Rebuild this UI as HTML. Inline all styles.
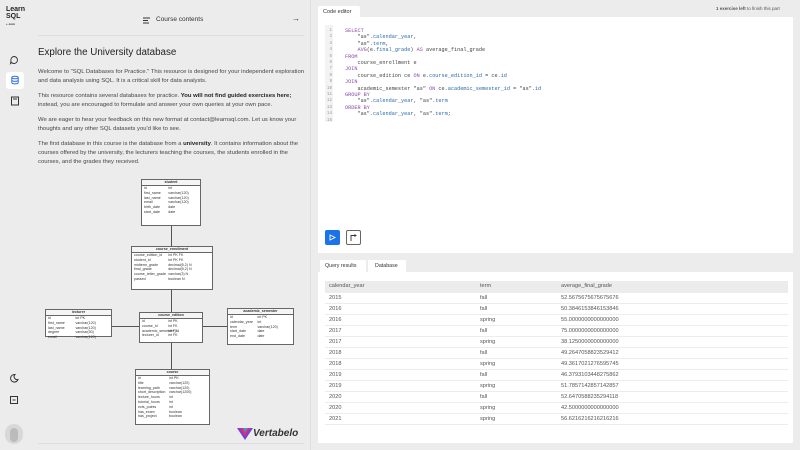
<!DOCTYPE html>
<html><head><meta charset="utf-8"><style>
*{box-sizing:border-box;margin:0;padding:0}
body{width:800px;height:450px;background:#ececec;font-family:"Liberation Sans",sans-serif;position:relative;overflow:hidden;color:#333}
.abs{position:absolute}
p.t{position:absolute;left:38px;width:270px;font-size:5.9px;line-height:9px;color:#444}
.code{font-family:"Liberation Mono",monospace;font-size:5.2px;line-height:6.4px;white-space:pre}
.ln{color:#999;text-align:right;width:10px}
.k{color:#8a4ca8}.s{color:#2a6aa8}
table{border-collapse:collapse;font-size:5.6px;color:#555}
td{height:11px;border-bottom:1px solid #ececec;padding-left:4px}
.er{position:absolute;background:#fff;border:1px solid #666;font-size:3.6px;font-family:"Liberation Sans",sans-serif;color:#333;line-height:4.8px}
.er .h{border-bottom:1px solid #666;text-align:center;font-weight:bold;background:#f5f5f5;line-height:5px}
.er .r{display:flex;padding:0 2px}
.er .r span:nth-child(1){width:45%}.er .r span:nth-child(2){flex:1}
.ln2{position:absolute;background:#555}
</style></head><body>
<div class="abs" style="left:6px;top:6px;font-size:7px;font-weight:bold;line-height:7px;color:#222">Learn<br>SQL<br><span style="font-size:3px">+ com</span></div>
<svg class="abs" style="left:9px;top:55px" width="10" height="10"><path d="M5 1.5a3.5 3.5 0 1 1-2.5 6L1.5 8.5 2 6A3.5 3.5 0 0 1 5 1.5z" fill="none" stroke="#333" stroke-width="0.9"/></svg>
<div class="abs" style="left:6px;top:72px;width:18px;height:17px;background:#fff;border-radius:3px"></div>
<svg class="abs" style="left:10px;top:75px" width="10" height="10"><ellipse cx="5" cy="2.5" rx="3.2" ry="1.3" fill="none" stroke="#2d6fe0"/><path d="M1.8 2.5v5c0 1.8 6.4 1.8 6.4 0v-5M1.8 5c0 1.8 6.4 1.8 6.4 0" fill="none" stroke="#2d6fe0"/></svg>
<svg class="abs" style="left:10px;top:96px" width="10" height="10"><rect x="1.5" y="1" width="7" height="8" fill="none" stroke="#333"/><path d="M3 3h4" stroke="#333"/></svg>
<svg class="abs" style="left:9px;top:373px" width="10" height="10"><path d="M6 1.5a3.8 3.8 0 1 0 3 5 3 3 0 0 1-3-5z" fill="none" stroke="#333"/></svg>
<svg class="abs" style="left:9px;top:395px" width="10" height="10"><rect x="1.5" y="1.5" width="7" height="7" fill="none" stroke="#333"/><path d="M3.5 5h3" stroke="#333"/></svg>
<div class="abs" style="left:5px;top:424px;width:18px;height:20px;border-radius:9px;background:#d8d8d8"></div>
<div class="abs" style="left:10px;top:428px;width:8px;height:14px;background:#bbb;border-radius:4px"></div>

<svg class="abs" style="left:143px;top:17px" width="8" height="7"><path d="M0 1h7M0 3.5h5M0 6h6" stroke="#333" stroke-width="1"/></svg>
<div class="abs" style="left:156px;top:16px;font-size:6.5px;color:#333">Course contents</div>
<div class="abs" style="left:292px;top:14px;font-size:8px;color:#333">→</div>
<div class="abs" style="left:38px;top:35px;width:266px;height:1px;background:#ddd"></div>
<div class="abs" style="left:38px;top:47px;font-size:9.8px;color:#222">Explore the University database</div>
<p class="t" style="top:68px">Welcome to "SQL Databases for Practice." This resource is designed for your independent exploration and data analysis using SQL. It is a critical skill for data analysts.</p>
<p class="t" style="top:92px">This resource contains several databases for practice. <b style="color:#222">You will not find guided exercises here;</b> instead, you are encouraged to formulate and answer your own queries at your own pace.</p>
<p class="t" style="top:116px">We are eager to hear your feedback on this new format at contact@learnsql.com. Let us know your thoughts and any other SQL datasets you'd like to see.</p>
<p class="t" style="top:140px">The first database in this course is the database from a <b style="color:#222">university</b>. It contains information about the courses offered by the university, the lecturers teaching the courses, the students enrolled in the courses, and the grades they received.</p>

<div class="ln2" style="left:171px;top:226px;width:1px;height:20px"></div>
<div class="ln2" style="left:171px;top:290px;width:1px;height:22px"></div>
<div class="ln2" style="left:171px;top:343px;width:1px;height:26px"></div>
<div class="ln2" style="left:112px;top:326px;width:27px;height:1px"></div>
<div class="ln2" style="left:203px;top:326px;width:24px;height:1px"></div>
<div class="er" style="left:141px;top:179px;width:60px;height:47px"><div class="h">student</div><div class="r"><span>id</span><span>int</span></div><div class="r"><span>first_name</span><span>varchar(120)</span></div><div class="r"><span>last_name</span><span>varchar(120)</span></div><div class="r"><span>email</span><span>varchar(120)</span></div><div class="r"><span>birth_date</span><span>date</span></div><div class="r"><span>start_date</span><span>date</span></div></div>
<div class="er" style="left:131px;top:246px;width:82px;height:44px"><div class="h">course_enrollment</div><div class="r"><span>course_edition_id</span><span>int PK FK</span></div><div class="r"><span>student_id</span><span>int PK FK</span></div><div class="r"><span>midterm_grade</span><span>decimal(5,2) N</span></div><div class="r"><span>final_grade</span><span>decimal(5,2) N</span></div><div class="r"><span>course_letter_grade</span><span>varchar(3) N</span></div><div class="r"><span>passed</span><span>boolean N</span></div></div>
<div class="er" style="left:139px;top:312px;width:64px;height:31px"><div class="h">course_edition</div><div class="r"><span>id</span><span>int PK</span></div><div class="r"><span>course_id</span><span>int FK</span></div><div class="r"><span>academic_semester_id</span><span>int FK</span></div><div class="r"><span>lecturer_id</span><span>int FK</span></div></div>
<div class="er" style="left:45px;top:309px;width:67px;height:28px"><div class="h">lecturer</div><div class="r"><span>id</span><span>int PK</span></div><div class="r"><span>first_name</span><span>varchar(120)</span></div><div class="r"><span>last_name</span><span>varchar(120)</span></div><div class="r"><span>degree</span><span>varchar(50)</span></div><div class="r"><span>email</span><span>varchar(120)</span></div></div>
<div class="er" style="left:227px;top:308px;width:67px;height:37px"><div class="h">academic_semester</div><div class="r"><span>id</span><span>int PK</span></div><div class="r"><span>calendar_year</span><span>int</span></div><div class="r"><span>term</span><span>varchar(120)</span></div><div class="r"><span>start_date</span><span>date</span></div><div class="r"><span>end_date</span><span>date</span></div></div>
<div class="er" style="left:135px;top:369px;width:75px;height:56px"><div class="h">course</div><div class="r"><span>id</span><span>int PK</span></div><div class="r"><span>title</span><span>varchar(120)</span></div><div class="r"><span>learning_path</span><span>varchar(120)</span></div><div class="r"><span>short_description</span><span>varchar(1200)</span></div><div class="r"><span>lecture_hours</span><span>int</span></div><div class="r"><span>tutorial_hours</span><span>int</span></div><div class="r"><span>ects_points</span><span>int</span></div><div class="r"><span>has_exam</span><span>boolean</span></div><div class="r"><span>has_project</span><span>boolean</span></div></div>
<svg class="abs" style="left:237px;top:427px" width="16" height="14"><path d="M0 1l8 12 8-12z" fill="#7b3fd0"/><path d="M3 1l5 8 5-8z" fill="#e0306a"/><path d="M6 1l2 4 3-4z" fill="#2aa0e0"/></svg>
<div class="abs" style="left:253px;top:428px;font-size:10px;font-style:italic;font-weight:bold;color:#333">Vertabelo</div>
<div class="abs" style="left:38px;top:443px;width:266px;height:1px;background:#ddd"></div>

<div class="abs" style="left:310px;top:0;width:1px;height:450px;background:#ddd"></div>
<div class="abs" style="left:318px;top:6px;width:42px;height:12px;background:#fff;border-radius:2px 2px 0 0;font-size:5.5px;padding:3px 0 0 5px">Code editor</div>
<div class="abs" style="left:716px;top:6px;font-size:4.5px;color:#555"><b>1 exercise left</b> to finish this part</div>
<div class="abs" style="left:318px;top:17px;width:475px;height:236px;background:#fff"></div>
<div class="abs" style="left:325px;top:25px;width:8px;height:97px;background:#f3f3f3"></div>
<div class="abs code ln" style="left:322px;top:28px;font-size:4.2px">1
2
3
4
5
6
7
8
9
10
11
12
13
14
15</div>
<div class="abs code" style="left:345px;top:28px;color:#444"><span class="k">SELECT</span>
    "as".<span class="s">calendar_year</span>,
    "as".<span class="s">term</span>,
    <span class="k">AVG</span>(e.<span class="s">final_grade</span>) <span class="k">AS</span> average_final_grade
<span class="k">FROM</span>
    course_enrollment e
<span class="k">JOIN</span>
    course_edition ce <span class="k">ON</span> e.<span class="s">course_edition_id</span> = ce.<span class="s">id</span>
<span class="k">JOIN</span>
    academic_semester "as" <span class="k">ON</span> ce.<span class="s">academic_semester_id</span> = "as".<span class="s">id</span>
<span class="k">GROUP BY</span>
    "as".<span class="s">calendar_year</span>, "as".<span class="s">term</span>
<span class="k">ORDER BY</span>
    "as".<span class="s">calendar_year</span>, "as".<span class="s">term</span>;</div>
<div class="abs" style="left:325px;top:230px;width:15px;height:15px;background:#1a73e8;border-radius:2px"></div>
<svg class="abs" style="left:329px;top:234px" width="7" height="7"><path d="M1 1l5 2.5-5 2.5z" fill="none" stroke="#fff" stroke-width="0.9"/></svg>
<div class="abs" style="left:346px;top:230px;width:15px;height:15px;border:1px solid #666;border-radius:2px;background:#fff"></div>
<svg class="abs" style="left:350px;top:234px" width="7" height="7"><path d="M1 7V1.5h5M4.5 0.5l1.5 1-1.5 1" fill="none" stroke="#333" stroke-width="0.9"/></svg>
<div class="abs" style="left:320px;top:260px;width:46px;height:12px;background:#fff;font-size:5.3px;padding:3px 0 0 5px">Query results</div>
<div class="abs" style="left:368px;top:260px;width:38px;height:12px;background:#fff;font-size:5.3px;padding:3px 0 0 7px">Database</div>
<div class="abs" style="left:318px;top:272px;width:475px;height:171px;background:#fff"></div>
<table class="abs" style="left:325px;top:281px;width:463px">
<tr style="background:#ececec"><td style="width:151px">calendar_year</td><td style="width:81px">term</td><td>average_final_grade</td></tr>
<tr><td>2015</td><td>fall</td><td>52.5675675675675676</td></tr>
<tr><td>2016</td><td>fall</td><td>50.3846153846153846</td></tr>
<tr><td>2016</td><td>spring</td><td>55.0000000000000000</td></tr>
<tr><td>2017</td><td>fall</td><td>75.0000000000000000</td></tr>
<tr><td>2017</td><td>spring</td><td>38.1250000000000000</td></tr>
<tr><td>2018</td><td>fall</td><td>49.2647058823529412</td></tr>
<tr><td>2018</td><td>spring</td><td>49.3617021276595745</td></tr>
<tr><td>2019</td><td>fall</td><td>46.3793103448275862</td></tr>
<tr><td>2019</td><td>spring</td><td>51.7857142857142857</td></tr>
<tr><td>2020</td><td>fall</td><td>52.6470588235294118</td></tr>
<tr><td>2020</td><td>spring</td><td>42.5000000000000000</td></tr>
<tr><td>2021</td><td>spring</td><td>56.6216216216216216</td></tr>
</table>
</body></html>
